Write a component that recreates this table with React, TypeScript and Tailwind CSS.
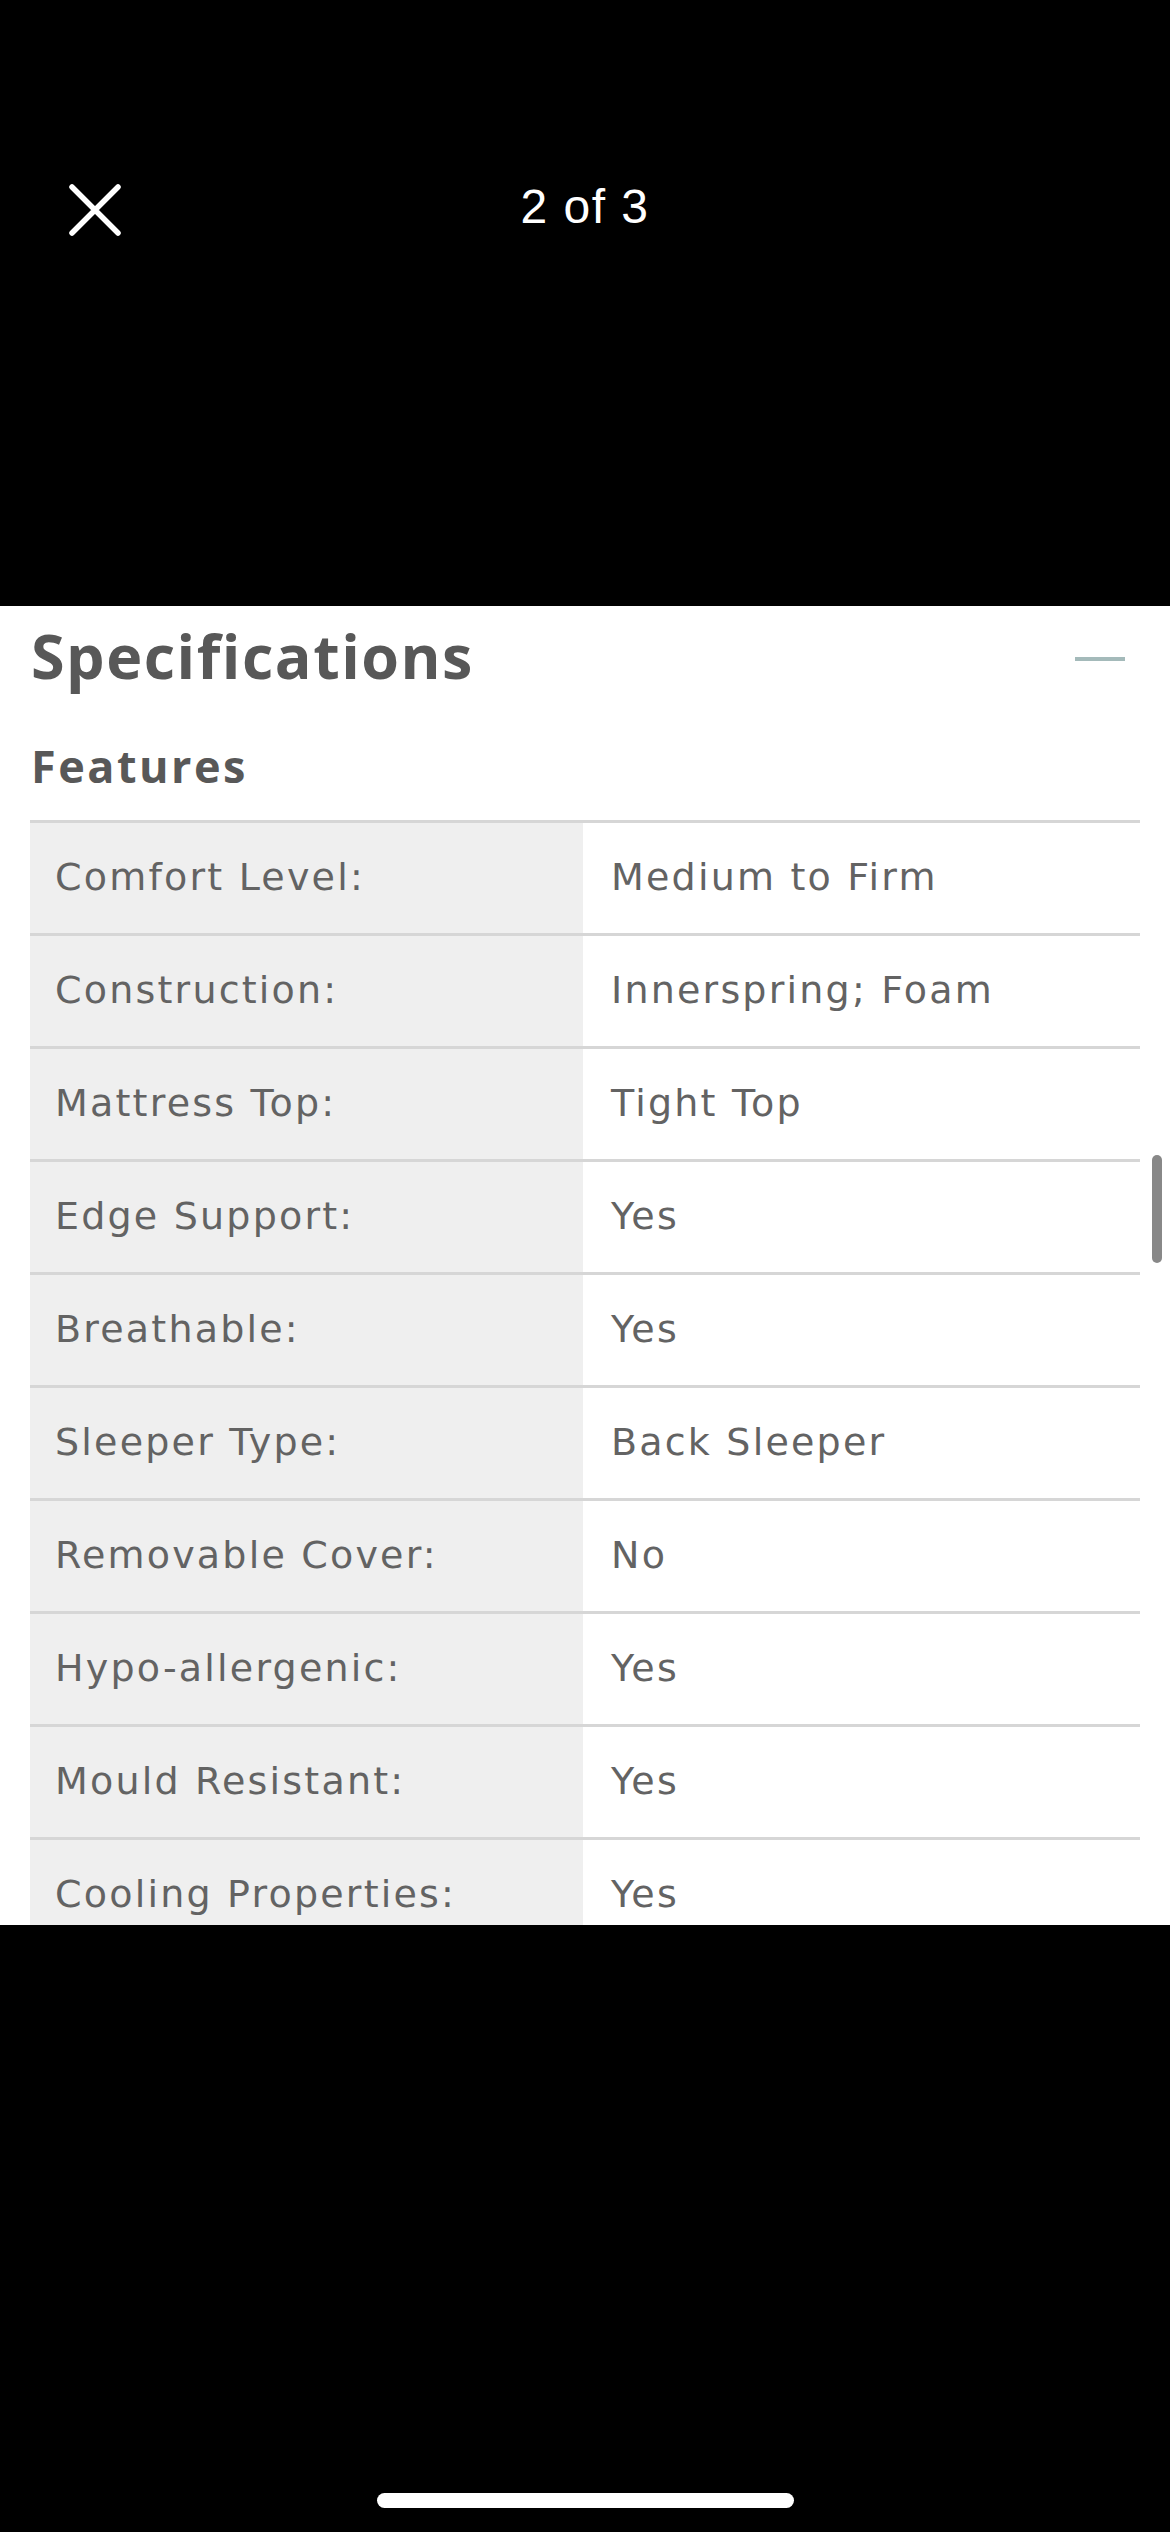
import React from "react";

const rows: [string, string][] = [
  ["Comfort Level:", "Medium to Firm"],
  ["Construction:", "Innerspring; Foam"],
  ["Mattress Top:", "Tight Top"],
  ["Edge Support:", "Yes"],
  ["Breathable:", "Yes"],
  ["Sleeper Type:", "Back Sleeper"],
  ["Removable Cover:", "No"],
  ["Hypo-allergenic:", "Yes"],
  ["Mould Resistant:", "Yes"],
  ["Cooling Properties:", "Yes"],
];

export default function App() {
  return (
    <div className="w-[1170px] h-[2532px] bg-black flex flex-col overflow-hidden">
      {/* top black area with header */}
      <div className="h-[606px] pt-[167px]">
        <div className="grid grid-cols-[1fr_auto_1fr] h-[80px] items-center">
          <div className="flex items-center pl-[67px]">
            <svg width="56" height="56" viewBox="0 0 56 56" className="mt-[6px]">
              <path d="M5 5 L51 51 M51 5 L5 51" stroke="white" strokeWidth="5.5" strokeLinecap="round" fill="none" />
            </svg>
          </div>
          <div className="text-white text-[48px] leading-[80px] tracking-[1.5px] font-['Liberation_Sans',Arial,sans-serif]">2 of 3</div>
          <div />
        </div>
      </div>

      {/* white panel */}
      <div className="relative h-[1319px] bg-white overflow-hidden pt-[10px] px-[30px] font-['Open_Sans','Noto_Sans',sans-serif] text-[#585858]">
        <div className="flex items-center justify-between h-[80px]">
          <div className="pl-[1px] text-[61px] leading-[80px] font-bold tracking-[1.5px]">Specifications</div>
          <div className="w-[50px] h-[4px] bg-[#a4baba] mr-[15px] mt-[5px]" />
        </div>
        <div className="mt-[48px] pl-[1px] text-[45px] leading-[44px] font-bold tracking-[2.5px]">Features</div>
        <div className="mt-[32px] flex flex-col">
          {rows.map(([k, v]) => (
            <div key={k} className="grid grid-cols-[553px_1fr] h-[113px] border-t-[3px] border-[#d6d6d6] shrink-0">
              <div className="bg-[#efefef] flex items-center pl-[25px] pb-[3px] text-[38px] leading-none font-normal tracking-[2.2px] text-[#636363] font-['DejaVu_Sans',sans-serif]">{k}</div>
              <div className="bg-white flex items-center pl-[28px] pb-[3px] text-[38px] leading-none font-normal tracking-[2.2px] text-[#636363] font-['DejaVu_Sans',sans-serif]">{v}</div>
            </div>
          ))}
        </div>
        <div className="absolute left-[1152px] top-[549px] w-[10px] h-[108px] rounded-full bg-[#888888]" />
      </div>

      {/* bottom black area */}
      <div className="flex-1 flex flex-col items-center">
        <div className="mt-[568px] w-[417px] h-[15px] rounded-full bg-white" />
      </div>
    </div>
  );
}
